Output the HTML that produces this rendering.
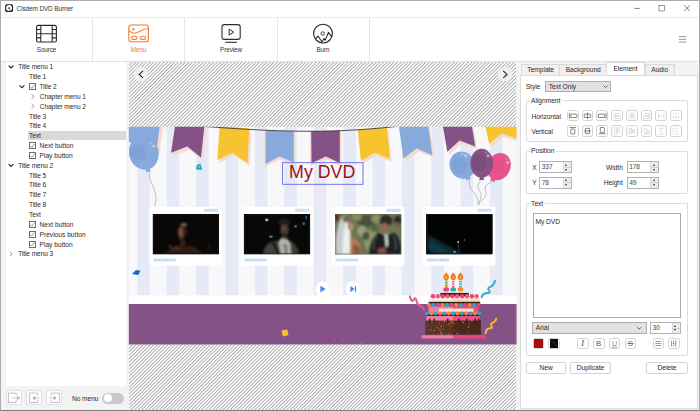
<!DOCTYPE html>
<html><head><meta charset="utf-8"><title>Cisdem DVD Burner</title>
<style>
*{box-sizing:border-box;margin:0;padding:0}
html,body{width:700px;height:411px;overflow:hidden;background:#f3f3f3}
body{font-family:"Liberation Sans",sans-serif;font-size:7px;color:#2a2a2a;position:relative}
.a{position:absolute}
.t{position:absolute;white-space:nowrap;line-height:10px;height:10px;font-size:6.6px;letter-spacing:-0.09px}
.r{font-size:6.7px;letter-spacing:-0.06px}
#win{left:0;top:0;width:700px;height:411px;border:1px solid #ababab;border-bottom:1.5px solid #7e7e7e;background:#f3f3f3}
#titlebar{left:1px;top:1px;width:698px;height:16px;background:#fff}
#toolbar{left:1px;top:17px;width:698px;height:44.5px;background:#fff;border-top:1px solid #ebebeb;border-bottom:1px solid #e2e2e2}
.vsep{position:absolute;top:18px;width:1px;height:43px;background:#e6e6e6}
#tree{left:5.5px;top:61.5px;width:120px;height:324.5px;background:#fff}
#hatch{left:128.7px;top:61.5px;width:387.8px;height:348px;background:#e9e9e9;background-image:repeating-linear-gradient(135deg,#a4a4a4 0,#fafafa 0.8px,#fafafa 1.7px,#a4a4a4 2.5px)}
#sel{left:27.5px;top:130.8px;width:98px;height:9.6px;background:#d9d9d9}
.cb{position:absolute;width:7.2px;height:7.2px;border:0.65px solid #6e6e6e;background:#fff}
.tbl{position:absolute;top:44.5px;width:60px;text-align:center;font-size:6.4px;line-height:10px;color:#333;letter-spacing:-0.13px}
#rp{left:519.5px;top:74.5px;width:178.5px;height:334.5px;background:#fff;border:1px solid #dcdcdc}
.tab{position:absolute;top:63.7px;height:11.3px;background:#f0f0f0;border:1px solid #d9d9d9;border-bottom:none;text-align:center;font-size:6.7px;line-height:10px;letter-spacing:-0.06px}
.tab.on{top:61.8px;height:13.7px;background:#fff;line-height:11.5px}
.grp{position:absolute;border:1px solid #dcdcdc;border-radius:1px}
.gl{position:absolute;background:#fff;padding:0 1.5px;white-space:nowrap;line-height:9px;height:9px;font-size:6.7px;letter-spacing:-0.06px}
.ab{position:absolute;width:11.8px;height:11.4px;border:1px solid #d2d2d2;border-radius:2.5px;background:#fff}
.spin{position:absolute;height:12px;border:1px solid #b2b2b2;background:#fff;font-size:6.6px;line-height:10px;padding-left:1.6px;letter-spacing:-0.1px;color:#444}
.spin i{position:absolute;right:0;top:0;width:8px;height:10px;background:#ececec;border-left:1px solid #d6d6d6}
.spin i:before{content:"";position:absolute;left:1.6px;top:1.5px;border:1.9px solid transparent;border-top:none;border-bottom:2px solid #2c2c2c}
.spin i:after{content:"";position:absolute;left:1.6px;bottom:1.5px;border:1.9px solid transparent;border-bottom:none;border-top:2px solid #2c2c2c}
.spin i b{position:absolute;left:0;top:4.6px;width:7px;height:0.8px;background:#d0d0d0}
.combo{position:absolute;height:11.4px;border:1px solid #adadad;background:#e2e2e2;font-size:6.7px;line-height:9.4px;padding-left:2.5px;letter-spacing:-0.06px}
.btn{position:absolute;height:11.8px;border:1px solid #d4d4d4;border-radius:2px;background:#fff;text-align:center;font-size:6.7px;line-height:9.8px;letter-spacing:-0.06px}
.sb{position:absolute;width:11.8px;height:11.8px;border:1px solid #d2d2d2;border-radius:2.5px;background:#fff}
.lb{position:absolute;width:16.3px;height:15px;border:1px solid #dedede;border-radius:2.5px;background:#fff}
svg{position:absolute;overflow:visible}
</style></head><body>
<div id="win" class="a"></div><div id="titlebar" class="a"></div><div id="toolbar" class="a"></div>
<div class="vsep" style="left:92px"></div><div class="vsep" style="left:184.3px"></div><div class="vsep" style="left:277px"></div><div class="vsep" style="left:369.3px"></div>
<svg style="left:5px;top:3.9px" width="8.2" height="8.2" viewBox="0 0 9 9"><rect x="0.2" y="0.2" width="8.6" height="8.6" rx="1.8" fill="#1d1a19"/><circle cx="4.5" cy="4.5" r="3.3" fill="#fff"/><circle cx="4.5" cy="4.5" r="1" fill="#1d1a19"/><path d="M4.7 4.6 L6.6 7.6 L4.9 8.2 Z" fill="#e4561f"/></svg>
<div class="t" style="left:16.6px;top:3.6px;color:#333;font-size:6.5px;letter-spacing:-0.15px">Cisdem DVD Burner</div>
<svg style="left:630px;top:2px" width="66" height="14" viewBox="630 2 66 14" fill="none" stroke="#555" stroke-width="0.7"><path d="M634.2 8.4H640"/><rect x="659" y="5.4" width="5.6" height="5.5" stroke-width="0.600"/><path d="M684.1 5.3l5.8 5.7M689.9 5.3l-5.8 5.7"/></svg>
<svg style="left:678px;top:35px" width="10" height="9" viewBox="678 35 10 9" stroke="#8a8a8a" stroke-width="0.9"><path d="M679 36.6h7.2M679 39.3h7.2M679 42h7.2"/></svg>
<svg style="left:35px;top:24px" width="24" height="20" viewBox="35 24 24 20" fill="none" stroke="#2c2c2c" stroke-width="1.1"><rect x="36.6" y="25.4" width="19.8" height="16.6" rx="1.6"/><path d="M40.8 25.4v16.6M52.2 25.4v16.6M40.8 33.7h11.4M36.6 29.5h4.2M36.6 33.7h4.2M36.6 37.9h4.2M52.2 29.5h4.2M52.2 33.7h4.2M52.2 37.9h4.2"/></svg>
<svg style="left:127px;top:23px" width="24" height="21" viewBox="127 23 24 21" fill="none" stroke="#f47b30" stroke-width="1.1"><rect x="128.8" y="25" width="19.6" height="16.8" rx="2.6"/><path d="M129 30.4c2.200 2.400 5 3.600 8.200 2.200s6-4.400 11.200-3.700"/><circle cx="133.4" cy="29.3" r="0.9" fill="#f47b30" stroke-width="0.6"/><rect x="131.6" y="36.3" width="5.4" height="3.1" rx="1.5"/><rect x="140.2" y="36.3" width="5.4" height="3.1" rx="1.5"/></svg>
<svg style="left:220px;top:23px" width="24" height="21" viewBox="220 23 24 21" fill="none" stroke="#2c2c2c" stroke-width="1.1"><rect x="222" y="24.6" width="18.2" height="14.8" rx="2.2"/><path d="M225.4 42.3h11.6"/><path d="M229.2 29.2v5.8l4.6-2.9z" stroke-width="1" stroke-linejoin="round"/></svg>
<svg style="left:312px;top:23px" width="24" height="22" viewBox="312 23 24 22" fill="none" stroke="#222" stroke-width="1.1"><circle cx="323" cy="33.6" r="9.400"/><circle cx="322.700" cy="33.500" r="1.700" stroke-width="0.900"/><path d="M315.300 39l2.900-2.800 3.800 5.800 2-3.400 1.200 1.600 3.200-7.800 3.500 4.700" stroke-linejoin="round" stroke-width="1.050"/></svg>
<div class="tbl" style="left:16.5px;color:#333">Source</div><div class="tbl" style="left:108.6px;color:#f47b30">Menu</div><div class="tbl" style="left:201px;color:#333">Preview</div><div class="tbl" style="left:293px;color:#333">Burn</div>
<div id="tree" class="a"></div><div id="sel" class="a"></div>
<div class="t" style="left:18.2px;top:62px">Title menu 1</div><div class="t" style="left:29px;top:72px">Title 1</div><div class="cb" style="left:28.8px;top:82.99px"></div><div class="t" style="left:39.5px;top:82px">Title 2</div><div class="t" style="left:39.8px;top:92px">Chapter menu 1</div><div class="t" style="left:39.8px;top:102px">Chapter menu 2</div><div class="t" style="left:29px;top:112px">Title 3</div><div class="t" style="left:29px;top:121px">Title 4</div><div class="t" style="left:29px;top:131px">Text</div><div class="cb" style="left:28.8px;top:142.06px"></div><div class="t" style="left:39.5px;top:141px;letter-spacing:0.02px">Next button</div><div class="cb" style="left:28.8px;top:151.91px"></div><div class="t" style="left:39.5px;top:151px;letter-spacing:0.02px">Play button</div><div class="t" style="left:18.2px;top:161px">Title menu 2</div><div class="t" style="left:29px;top:171px">Title 5</div><div class="t" style="left:29px;top:180px">Title 6</div><div class="t" style="left:29px;top:190px">Title 7</div><div class="t" style="left:29px;top:200px">Title 8</div><div class="t" style="left:29px;top:210px">Text</div><div class="cb" style="left:28.8px;top:220.82px"></div><div class="t" style="left:39.5px;top:220px;letter-spacing:0.02px">Next button</div><div class="cb" style="left:28.8px;top:230.67px"></div><div class="t" style="left:39.5px;top:230px;letter-spacing:0.02px">Previous button</div><div class="cb" style="left:28.8px;top:240.51px"></div><div class="t" style="left:39.5px;top:240px;letter-spacing:0.02px">Play button</div><div class="t" style="left:18.2px;top:249px">Title menu 3</div>
<svg style="left:0;top:0" width="130" height="411" viewBox="0 0 130 411" fill="none" stroke="#2a2a2a"><path d="M8.60 65.60l2.4 2.4 2.4-2.4" stroke-width="1.1" stroke="#222"/><path d="M30.30 86.69l1.5 1.7 2.9-3.6" stroke-width="0.6" stroke="#555"/><path d="M19.60 85.29l2.4 2.4 2.4-2.4" stroke-width="1.1" stroke="#222"/><path d="M31.70 94.14l2.3 2.3-2.3 2.3" stroke-width="0.7" stroke="#666"/><path d="M31.70 103.98l2.3 2.3-2.3 2.3" stroke-width="0.7" stroke="#666"/><path d="M30.30 145.76l1.5 1.7 2.9-3.6" stroke-width="0.6" stroke="#555"/><path d="M30.30 155.60l1.5 1.7 2.9-3.6" stroke-width="0.6" stroke="#555"/><path d="M8.60 164.05l2.4 2.4 2.4-2.4" stroke-width="1.1" stroke="#222"/><path d="M30.30 224.52l1.5 1.7 2.9-3.6" stroke-width="0.6" stroke="#555"/><path d="M30.30 234.37l1.5 1.7 2.9-3.6" stroke-width="0.6" stroke="#555"/><path d="M30.30 244.21l1.5 1.7 2.9-3.6" stroke-width="0.6" stroke="#555"/><path d="M9.90 251.66l2.3 2.3-2.3 2.3" stroke-width="0.7" stroke="#666"/></svg>
<div class="lb" style="left:5.6px;top:390.4px"></div><div class="lb" style="left:26px;top:390.4px"></div><div class="lb" style="left:46.2px;top:390.4px"></div><svg style="left:0;top:388px" width="70" height="20" viewBox="0 388 70 20" fill="none" stroke="#b0b0b0" stroke-width="0.8"><path d="M16.200 395.600v-2.500h-7.800v9.400h7.800v-2.500"/><path d="M12.400 398h5.400"/><path d="M17.400 396.400l2.200 1.600-2.200 1.600z" fill="#b0b0b0"/>
<path d="M37.700 395.600v-2.500h-8.300v9.400h8.300v-2.500"/><path d="M34.600 398h4.800"/><path d="M35 396.400l-2.200 1.600 2.200 1.600z" fill="#b0b0b0"/>
<path d="M51.200 395.600v-2.500h8.200v9.400h-8.200v-2.500"/><path d="M49.200 398h5"/><path d="M54 396.400l2.200 1.600-2.200 1.600z" fill="#b0b0b0"/></svg>
<div class="t" style="left:71.9px;top:393.7px;font-size:6.7px">No menu</div>
<div class="a" style="left:102.1px;top:392.7px;width:22px;height:11.2px;border-radius:5.6px;background:#c9c9c9"></div><div class="a" style="left:103.6px;top:394.2px;width:8.2px;height:8.2px;border-radius:50%;background:#fff"></div>
<div id="hatch" class="a"></div>
<svg style="left:128px;top:126px" width="390" height="220" viewBox="128 126 390 220"><defs><filter id="b1" x="-20%" y="-20%" width="140%" height="140%"><feGaussianBlur stdDeviation="1.2"/></filter><filter id="b2" x="-20%" y="-20%" width="140%" height="140%"><feGaussianBlur stdDeviation="2.2"/></filter><filter id="b9" x="-20%" y="-20%" width="140%" height="140%"><feGaussianBlur stdDeviation="0.9"/></filter><filter id="b0" x="-20%" y="-20%" width="140%" height="140%"><feGaussianBlur stdDeviation="0.6"/></filter><clipPath id="c0"><rect x="152.8" y="214" width="66.2" height="40.3"/></clipPath><clipPath id="c1"><rect x="243.9" y="214" width="66.2" height="40.3"/></clipPath><clipPath id="c2"><rect x="335.0" y="214" width="66.2" height="40.3"/></clipPath><clipPath id="c3"><rect x="426.1" y="214" width="66.2" height="40.3"/></clipPath><clipPath id="ic"><rect x="128.8" y="126.7" width="387.7" height="217.8"/></clipPath></defs><g clip-path="url(#ic)"><rect x="128.8" y="126.7" width="400" height="230" fill="#f8f8fb"/><rect x="137.3" y="126.7" width="12.6" height="168.7" fill="#e5eaf6"/><rect x="166.7" y="126.7" width="12.6" height="168.7" fill="#e5eaf6"/><rect x="196.1" y="126.7" width="12.6" height="168.7" fill="#e5eaf6"/><rect x="225.5" y="126.7" width="12.6" height="168.7" fill="#e5eaf6"/><rect x="254.9" y="126.7" width="12.6" height="168.7" fill="#e5eaf6"/><rect x="284.3" y="126.7" width="12.6" height="168.7" fill="#e5eaf6"/><rect x="313.7" y="126.7" width="12.6" height="168.7" fill="#e5eaf6"/><rect x="343.1" y="126.7" width="12.6" height="168.7" fill="#e5eaf6"/><rect x="372.5" y="126.7" width="12.6" height="168.7" fill="#e5eaf6"/><rect x="401.9" y="126.7" width="12.6" height="168.7" fill="#e5eaf6"/><rect x="431.3" y="126.7" width="12.6" height="168.7" fill="#e5eaf6"/><rect x="460.7" y="126.7" width="12.6" height="168.7" fill="#e5eaf6"/><rect x="490.1" y="126.7" width="12.6" height="168.7" fill="#e5eaf6"/><rect x="128" y="295.4" width="390" height="8.6" fill="#fff"/><rect x="128" y="304" width="390" height="41" fill="#845286"/><rect x="515.4" y="304" width="1.2" height="41" fill="#9a6b9b"/><polygon points="131.0,123.5 163.7,123.5 159.4,153.5 146.0,153.5 131.0,144.5" fill="#f3dccf"/><polygon points="128.0,120.0 160.7,120.0 156.4,150.0 143.0,150.0 128.0,141.0" fill="#87a9dc"/><polygon points="178.2,123.2 207.0,125.2 203.2,160.6 189.5,149.8 173.2,155.9" fill="#f3dccf"/><polygon points="176.0,120.0 204.8,122.0 201.0,157.4 187.3,146.6 171.0,152.7" fill="#845286"/><polygon points="221.6,129.0 251.2,131.6 249.6,165.9 234.7,155.7 219.4,162.9" fill="#f3dccf"/><polygon points="219.6,126.0 249.2,128.6 247.6,162.9 232.7,152.7 217.4,159.9" fill="#f7c32e"/><polygon points="264.2,131 295.800,131.400 295.800,166 279.600,159.600 264.200,167.400" fill="#f3dccf"/><polygon points="265.6,130.6 293.8,131.2 293.8,162.5 279.5,156.4 265.6,164.0" fill="#f3dccf"/><polygon points="265.6,130.6 293.8,131.2 293.8,162.5 279.5,156.4 265.6,164.0" fill="#87a9dc"/><polygon points="309.800,131.400 341.600,131 341.600,166.200 326,159.600 310,166.600" fill="#f3dccf"/><polygon points="311.2,131.2 339.8,130.8 339.8,162.9 325.9,156.4 311.5,163.3" fill="#f3dccf"/><polygon points="311.2,131.2 339.8,130.8 339.8,162.9 325.9,156.4 311.5,163.3" fill="#845286"/><polygon points="359.6,132.8 388.6,130.8 391.7,162.0 376.4,155.9 362.7,164.1" fill="#f3dccf"/><polygon points="357.8,129.6 386.8,127.6 389.9,158.8 374.6,152.7 360.9,160.9" fill="#f7c32e"/><polygon points="400.0,123.0 429.4,123.0 434.4,158.2 418.7,151.6 405.4,161.4" fill="#f3dccf"/><polygon points="398.0,120.0 427.4,120.0 432.4,155.2 416.7,148.6 403.4,158.4" fill="#87a9dc"/><polygon points="443.8,123.0 472.9,123.0 477.3,149.6 461.6,143.4 449.3,154.7" fill="#f3dccf"/><polygon points="441.8,120.0 470.9,120.0 475.3,146.6 459.6,140.4 447.3,151.7" fill="#845286"/><polygon points="486.0,123.4 522.0,123.4 522.0,142.9 503.5,136.7 491.2,147.5" fill="#f3dccf"/><polygon points="484.0,120.0 520.0,120.0 520.0,139.5 501.5,133.3 489.2,144.1" fill="#f7c32e"/><path d="M203 126.3C240 129.2 270 130.8 300 131.2S360 130.4 397 126.4" fill="none" stroke="#3e3a3a" stroke-width="0.9"/><g transform="rotate(-14 143.800 152.600)"><path d="M142.200 169l-1 3.400h5.200l-1-3.400z" fill="#87a9dc"/><ellipse cx="143.800" cy="152.600" rx="14.800" ry="17.300" fill="#87a9dc"/></g><circle cx="137.800" cy="152.600" r="8" fill="#7fa2d6"/><circle cx="153.600" cy="146.200" r="1.700" fill="#b3cbed"/><circle cx="150.600" cy="142.800" r="1" fill="#b3cbed"/><path d="M149.800 172.600c-1.500 8 4.500 14 5.800 22s-2 10 0 12" fill="none" stroke="#9a9a9a" stroke-width="0.600"/><path d="M469.700 180.500c-0.600 3 -0.400 5 0.600 7.500 1.500 3.400 4.600 4.600 6.200 8.400 1.200 3 1.400 5.600 1.700 8.600M481 179.500c-1.800 2.600-3.200 4.600-3.100 7.200 0.200 3 2.800 4.800 3.200 7.800 0.400 3.600-2 6.600-2.700 10.500M491 182.500c-3.400 1.200-5.400 2.800-5.800 5.200-0.400 2.400 1.200 4.200 0.900 6.800-0.400 3-3.400 4.800-5.400 6.800-1.200 1.200-2 2.400-2.500 3.700" fill="none" stroke="#9a9a9a" stroke-width="0.600"/><g transform="rotate(24 498.8 166.6)"><path d="M497.2 180.0l-1 2.600h5.200l-1-2.600z" fill="#e8558b"/><ellipse cx="498.8" cy="166.6" rx="11.6" ry="14" fill="#e8558b"/><ellipse cx="496.3" cy="166.1" rx="7.2" ry="8.7" fill="#e45087"/><circle cx="505.2" cy="159.3" r="1.500" fill="#fff" fill-opacity="0.450"/><circle cx="503.0" cy="156.1" r="0.800" fill="#fff" fill-opacity="0.450"/></g><g transform="rotate(-24 462.3 165.2)"><path d="M460.7 178.6l-1 2.600h5.200l-1-2.600z" fill="#87a9dc"/><ellipse cx="462.3" cy="165.2" rx="12.6" ry="14" fill="#87a9dc"/><ellipse cx="459.8" cy="164.7" rx="7.8" ry="8.7" fill="#80a3d7"/><circle cx="469.2" cy="157.9" r="1.500" fill="#fff" fill-opacity="0.450"/><circle cx="466.8" cy="154.7" r="0.800" fill="#fff" fill-opacity="0.450"/></g><g transform="rotate(0 481.7 163.3)"><path d="M480.1 177.3l-1 2.600h5.200l-1-2.600z" fill="#845286"/><ellipse cx="481.7" cy="163.3" rx="11.4" ry="14.6" fill="#845286"/><ellipse cx="479.2" cy="162.8" rx="7.1" ry="9.1" fill="#7d4c7f"/><circle cx="488.0" cy="155.7" r="1.500" fill="#fff" fill-opacity="0.450"/><circle cx="485.8" cy="152.4" r="0.800" fill="#fff" fill-opacity="0.450"/></g><polygon points="196.600,165.200 200.400,163.400 202.400,169.600 196.200,169.800" fill="#1fb0b0"/><rect x="198.300" y="166" width="2" height="2" fill="#5fd0d0"/><polygon points="136,270.100 140.600,270.800 138.200,275.100 132,274" fill="#0f6cbf"/><polygon points="281.600,330.600 287.200,329.600 288.600,335 282.800,336.600" fill="#f7c32e"/><circle cx="334.600" cy="339" r="1" fill="#e8457f"/><circle cx="343" cy="339.800" r="0.900" fill="#e8457f"/><polygon points="360.500,344.500 362,342.300 363.600,344.500" fill="#1fb0b0"/><rect x="149.5" y="206.900" width="72.600" height="58.600" fill="#fff"/><ellipse cx="205.7" cy="210.300" rx="1.350" ry="1.150" fill="none" stroke="#7fb6ec" stroke-width="0.550"/><ellipse cx="208.5" cy="210.300" rx="1.350" ry="1.150" fill="none" stroke="#7fb6ec" stroke-width="0.550"/><ellipse cx="211.3" cy="210.300" rx="1.350" ry="1.150" fill="none" stroke="#7fb6ec" stroke-width="0.550"/><ellipse cx="214.1" cy="210.300" rx="1.350" ry="1.150" fill="none" stroke="#7fb6ec" stroke-width="0.550"/><ellipse cx="216.9" cy="210.300" rx="1.350" ry="1.150" fill="none" stroke="#7fb6ec" stroke-width="0.550"/><ellipse cx="155.1" cy="260" rx="1.350" ry="1.150" fill="none" stroke="#7fb6ec" stroke-width="0.550"/><ellipse cx="157.8" cy="260" rx="1.350" ry="1.150" fill="none" stroke="#7fb6ec" stroke-width="0.550"/><ellipse cx="160.6" cy="260" rx="1.350" ry="1.150" fill="none" stroke="#7fb6ec" stroke-width="0.550"/><ellipse cx="163.3" cy="260" rx="1.350" ry="1.150" fill="none" stroke="#7fb6ec" stroke-width="0.550"/><ellipse cx="166.1" cy="260" rx="1.350" ry="1.150" fill="none" stroke="#7fb6ec" stroke-width="0.550"/><ellipse cx="168.8" cy="260" rx="1.350" ry="1.150" fill="none" stroke="#7fb6ec" stroke-width="0.550"/><ellipse cx="171.6" cy="260" rx="1.350" ry="1.150" fill="none" stroke="#7fb6ec" stroke-width="0.550"/><ellipse cx="174.3" cy="260" rx="1.350" ry="1.150" fill="none" stroke="#7fb6ec" stroke-width="0.550"/><rect x="152.8" y="214" width="66.200" height="40.300" fill="#030303"/><rect x="240.6" y="206.900" width="72.600" height="58.600" fill="#fff"/><ellipse cx="296.8" cy="210.300" rx="1.350" ry="1.150" fill="none" stroke="#7fb6ec" stroke-width="0.550"/><ellipse cx="299.6" cy="210.300" rx="1.350" ry="1.150" fill="none" stroke="#7fb6ec" stroke-width="0.550"/><ellipse cx="302.4" cy="210.300" rx="1.350" ry="1.150" fill="none" stroke="#7fb6ec" stroke-width="0.550"/><ellipse cx="305.2" cy="210.300" rx="1.350" ry="1.150" fill="none" stroke="#7fb6ec" stroke-width="0.550"/><ellipse cx="308.0" cy="210.300" rx="1.350" ry="1.150" fill="none" stroke="#7fb6ec" stroke-width="0.550"/><ellipse cx="246.2" cy="260" rx="1.350" ry="1.150" fill="none" stroke="#7fb6ec" stroke-width="0.550"/><ellipse cx="248.9" cy="260" rx="1.350" ry="1.150" fill="none" stroke="#7fb6ec" stroke-width="0.550"/><ellipse cx="251.7" cy="260" rx="1.350" ry="1.150" fill="none" stroke="#7fb6ec" stroke-width="0.550"/><ellipse cx="254.4" cy="260" rx="1.350" ry="1.150" fill="none" stroke="#7fb6ec" stroke-width="0.550"/><ellipse cx="257.2" cy="260" rx="1.350" ry="1.150" fill="none" stroke="#7fb6ec" stroke-width="0.550"/><ellipse cx="259.9" cy="260" rx="1.350" ry="1.150" fill="none" stroke="#7fb6ec" stroke-width="0.550"/><ellipse cx="262.7" cy="260" rx="1.350" ry="1.150" fill="none" stroke="#7fb6ec" stroke-width="0.550"/><ellipse cx="265.4" cy="260" rx="1.350" ry="1.150" fill="none" stroke="#7fb6ec" stroke-width="0.550"/><rect x="243.9" y="214" width="66.200" height="40.300" fill="#030303"/><rect x="331.7" y="206.900" width="72.600" height="58.600" fill="#fff"/><ellipse cx="387.9" cy="210.300" rx="1.350" ry="1.150" fill="none" stroke="#7fb6ec" stroke-width="0.550"/><ellipse cx="390.7" cy="210.300" rx="1.350" ry="1.150" fill="none" stroke="#7fb6ec" stroke-width="0.550"/><ellipse cx="393.5" cy="210.300" rx="1.350" ry="1.150" fill="none" stroke="#7fb6ec" stroke-width="0.550"/><ellipse cx="396.3" cy="210.300" rx="1.350" ry="1.150" fill="none" stroke="#7fb6ec" stroke-width="0.550"/><ellipse cx="399.1" cy="210.300" rx="1.350" ry="1.150" fill="none" stroke="#7fb6ec" stroke-width="0.550"/><ellipse cx="337.3" cy="260" rx="1.350" ry="1.150" fill="none" stroke="#7fb6ec" stroke-width="0.550"/><ellipse cx="340.1" cy="260" rx="1.350" ry="1.150" fill="none" stroke="#7fb6ec" stroke-width="0.550"/><ellipse cx="342.8" cy="260" rx="1.350" ry="1.150" fill="none" stroke="#7fb6ec" stroke-width="0.550"/><ellipse cx="345.6" cy="260" rx="1.350" ry="1.150" fill="none" stroke="#7fb6ec" stroke-width="0.550"/><ellipse cx="348.3" cy="260" rx="1.350" ry="1.150" fill="none" stroke="#7fb6ec" stroke-width="0.550"/><ellipse cx="351.1" cy="260" rx="1.350" ry="1.150" fill="none" stroke="#7fb6ec" stroke-width="0.550"/><ellipse cx="353.8" cy="260" rx="1.350" ry="1.150" fill="none" stroke="#7fb6ec" stroke-width="0.550"/><ellipse cx="356.6" cy="260" rx="1.350" ry="1.150" fill="none" stroke="#7fb6ec" stroke-width="0.550"/><rect x="335.0" y="214" width="66.200" height="40.300" fill="#030303"/><rect x="422.8" y="206.900" width="72.600" height="58.600" fill="#fff"/><ellipse cx="479.0" cy="210.300" rx="1.350" ry="1.150" fill="none" stroke="#7fb6ec" stroke-width="0.550"/><ellipse cx="481.8" cy="210.300" rx="1.350" ry="1.150" fill="none" stroke="#7fb6ec" stroke-width="0.550"/><ellipse cx="484.6" cy="210.300" rx="1.350" ry="1.150" fill="none" stroke="#7fb6ec" stroke-width="0.550"/><ellipse cx="487.4" cy="210.300" rx="1.350" ry="1.150" fill="none" stroke="#7fb6ec" stroke-width="0.550"/><ellipse cx="490.2" cy="210.300" rx="1.350" ry="1.150" fill="none" stroke="#7fb6ec" stroke-width="0.550"/><ellipse cx="428.4" cy="260" rx="1.350" ry="1.150" fill="none" stroke="#7fb6ec" stroke-width="0.550"/><ellipse cx="431.1" cy="260" rx="1.350" ry="1.150" fill="none" stroke="#7fb6ec" stroke-width="0.550"/><ellipse cx="433.9" cy="260" rx="1.350" ry="1.150" fill="none" stroke="#7fb6ec" stroke-width="0.550"/><ellipse cx="436.6" cy="260" rx="1.350" ry="1.150" fill="none" stroke="#7fb6ec" stroke-width="0.550"/><ellipse cx="439.4" cy="260" rx="1.350" ry="1.150" fill="none" stroke="#7fb6ec" stroke-width="0.550"/><ellipse cx="442.1" cy="260" rx="1.350" ry="1.150" fill="none" stroke="#7fb6ec" stroke-width="0.550"/><ellipse cx="444.9" cy="260" rx="1.350" ry="1.150" fill="none" stroke="#7fb6ec" stroke-width="0.550"/><ellipse cx="447.6" cy="260" rx="1.350" ry="1.150" fill="none" stroke="#7fb6ec" stroke-width="0.550"/><rect x="426.1" y="214" width="66.200" height="40.300" fill="#030303"/><g clip-path="url(#c0)"><rect x="153.60000000000002" y="214.800" width="64.600" height="38.700" fill="#0a0806"/><g filter="url(#b9)"><ellipse cx="182.400" cy="232" rx="4.400" ry="6.600" fill="#3a2519"/><ellipse cx="180.800" cy="232.400" rx="2.600" ry="5.200" fill="#7a4e38"/><ellipse cx="184.600" cy="232.800" rx="1.800" ry="4.600" fill="#2a1a12"/><ellipse cx="183.800" cy="224.600" rx="3.400" ry="1.600" fill="#6e675c"/><ellipse cx="181.500" cy="238.500" rx="2" ry="1.600" fill="#4a2c1e"/><path d="M166 253.500c3-5 8-7.500 13-8l4 1.500 5-1.500c6 0.500 11 3 14 8z" fill="#2e1c13"/><ellipse cx="176.500" cy="248.500" rx="5" ry="2" fill="#4a2c1e"/><rect x="180.500" y="240" width="4.600" height="6" fill="#3a2418"/><rect x="169.500" y="245.600" width="1.600" height="1.800" fill="#7a6a58"/><rect x="208.600" y="245.400" width="1" height="3.400" fill="#4a4a4a"/></g></g><rect x="153.8" y="215" width="64.200" height="38.300" fill="none" stroke="#2e2c24" stroke-width="0.350"/><g clip-path="url(#c1)"><rect x="244.70000000000002" y="214.800" width="64.600" height="38.700" fill="#070807"/><g filter="url(#b9)"><ellipse cx="284.200" cy="222.600" rx="6" ry="4.600" fill="#221a15"/><ellipse cx="284.600" cy="230.200" rx="4.200" ry="6" fill="#4e382b"/><ellipse cx="283.200" cy="228" rx="2" ry="2.600" fill="#6a4c3a"/><ellipse cx="284.600" cy="235.400" rx="3" ry="2.200" fill="#2e211a"/><path d="M263 254c1-8 6-12 12-13.500l5 2.500 3 11z" fill="#41423d"/><path d="M278.500 241l3-3 6 1 3.500 5 0.500 10h-11z" fill="#b5b4ad"/><path d="M290 241c5 2 8 6 9 13h-8z" fill="#3a3c36"/><path d="M273 240l8 14h-3l-7-12z" fill="#101010"/><path d="M283 244l2 10h3l-1-10z" fill="#7c7c76"/></g><g filter="url(#b0)"><ellipse cx="266.800" cy="219.900" rx="1.700" ry="1.300" fill="#b5b19a"/><ellipse cx="271" cy="236.600" rx="2" ry="1.100" fill="#77796c"/><circle cx="295.600" cy="226.200" r="1.200" fill="#a85e44"/><circle cx="303.600" cy="223.600" r="1.600" fill="#1d6466"/><rect x="305.400" y="216" width="1.400" height="3.400" fill="#1f7a7c"/></g></g><rect x="244.9" y="215" width="64.200" height="38.300" fill="none" stroke="#34382f" stroke-width="0.350"/><g clip-path="url(#c2)"><rect x="335" y="214" width="66.200" height="40.300" fill="#6c7652"/><g filter="url(#b9)"><ellipse cx="366" cy="221" rx="9" ry="6" fill="#46523a"/><ellipse cx="371" cy="241" rx="7" ry="11" fill="#8d9470"/><ellipse cx="362" cy="231" rx="4.500" ry="5.500" fill="#9aa07c"/><ellipse cx="376" cy="219" rx="5" ry="4" fill="#8a9068"/><ellipse cx="357" cy="217.500" rx="5" ry="3.500" fill="#858c64"/><ellipse cx="366" cy="236" rx="3.500" ry="4" fill="#4a553a"/><ellipse cx="374" cy="228" rx="3" ry="4" fill="#56603f"/><rect x="335" y="214" width="4" height="7" fill="#5e261c"/><path d="M336 254c-1-16 1-30 6-37 3-3 6-2 7 2 2 9 2 24 1 35z" fill="#c9cdd2"/><path d="M342.500 254c0-14 1-26 4-33l3 4c1 9 1 19 0 29z" fill="#eeeeec"/><ellipse cx="346.500" cy="219" rx="4" ry="3.400" fill="#77694c"/><ellipse cx="350.200" cy="225.500" rx="2.400" ry="4.400" fill="#9a7258"/><ellipse cx="351.600" cy="226.500" rx="1.500" ry="3.400" fill="#c09478"/><path d="M350 237c4 0 8 3 10 8l1 10h-11z" fill="#b07a5a"/><path d="M353 245c3-1 6 1 7 5v5h-7z" fill="#8a5a44"/><ellipse cx="386" cy="220.500" rx="6.600" ry="5.400" fill="#2e2c2a"/><ellipse cx="384.500" cy="227.800" rx="4.200" ry="4.800" fill="#96684e"/><ellipse cx="397.800" cy="220.500" rx="3.600" ry="4.600" fill="#2a2422"/><ellipse cx="397.400" cy="224.500" rx="2.400" ry="2.800" fill="#7a5642"/><path d="M369 254c0-9 3-17 9-21l8 3 8-3c5 3 7 9 7 21z" fill="#1c1d20"/><path d="M384.600 234l2.800 0 1 11-2.600 3z" fill="#cfd0d2"/><path d="M377 236c-3 3-4 9-3 14M393.500 236c2 4 3 9 2 14" stroke="#4c5054" stroke-width="1.500" fill="none"/><ellipse cx="382" cy="250.500" rx="4.500" ry="2.800" fill="#8a4e3c"/></g></g><g clip-path="url(#c3)"><rect x="426.9" y="214" width="66.200" height="40.300" fill="#020303"/><g filter="url(#b1)"><path d="M428 235l36 19h-36z" fill="#0a2a32"/><path d="M428 240l22 12h-22z" fill="#0e3a44"/><path d="M428 249l8 5h-8z" fill="#06181c"/></g><g filter="url(#b0)"><rect x="457.400" y="241" width="1.600" height="2" fill="#9aa"/><rect x="453.600" y="251" width="2" height="1.600" fill="#9aa"/><rect x="464" y="239" width="0.800" height="2" fill="#567"/><path d="M458 243l1 10" stroke="#1a2a30" stroke-width="1.600"/></g></g><rect x="427.7" y="214.800" width="64.600" height="38.700" fill="none" stroke="#262a2a" stroke-width="0.400"/><circle cx="322.800" cy="289.100" r="7.600" fill="#fff"/><circle cx="352.900" cy="289.100" r="7.600" fill="#fff"/><path d="M320.400 285.800v6.600l5.400-3.300z" fill="#4a90e2"/><path d="M350.300 286v6.200l4.400-3.100z" fill="#4a90e2"/><rect x="354.900" y="286" width="1.200" height="6.200" fill="#4a90e2"/><path d="M409.800 296.400c0.800 2.500 1.800 5 3 4.500s1-3 2.400-2.600 1.200 4 2.400 5.600 3.200 2 4.400 3 1.600 1.800 2 2.800" fill="none" stroke="#ea5a8e" stroke-width="2" stroke-linecap="round" stroke-linejoin="round"/><path d="M481.600 297.300c0.800-2.600 2.600-4 4.400-4.200s3.200 0.600 3.600-0.800-1.600-2.400-1.200-4 2.600-1.400 4-2.600 2-3 2.600-4.800" fill="none" stroke="#41b4c8" stroke-width="2.200" stroke-linecap="round" stroke-linejoin="round"/><path d="M485.600 333.200c0.200-2.600 1.600-4.200 3.200-4.800s3 0.200 3.200-1-1.400-1.800-1-3.200 2.200-1.400 3.400-2.400 1.600-1.800 1.800-3" fill="none" stroke="#f7b52e" stroke-width="2" stroke-linecap="round" stroke-linejoin="round"/><rect x="421.500" y="335.200" width="32" height="3.300" rx="1.200" fill="#f47aa8"/><rect x="453" y="335.200" width="32.700" height="3.300" rx="1.200" fill="#e8457f"/><rect x="425.400" y="320" width="28" height="14.600" fill="#5b3323"/><rect x="453" y="320" width="27.900" height="14.600" fill="#4a291b"/><rect x="426.400" y="315" width="27" height="5.600" fill="#f47aa8"/><rect x="453" y="315" width="27" height="5.600" fill="#ea4f88"/><rect x="429" y="318.600" width="1.600" height="4.5" rx="0.800" fill="#3a1f14"/><rect x="433.5" y="318.600" width="1.600" height="3.5" rx="0.800" fill="#3a1f14"/><rect x="447" y="318.600" width="1.600" height="4.0" rx="0.800" fill="#3a1f14"/><rect x="458" y="318.600" width="1.600" height="4.5" rx="0.800" fill="#3a1f14"/><rect x="466" y="318.600" width="1.600" height="4.1" rx="0.800" fill="#3a1f14"/><rect x="474.5" y="318.600" width="1.600" height="4.7" rx="0.800" fill="#3a1f14"/><rect x="478" y="318.600" width="1.600" height="3.5" rx="0.800" fill="#3a1f14"/><rect x="426" y="314.400" width="54.400" height="1.600" fill="#3a1f14"/><rect x="428.600" y="306.400" width="24.400" height="7" fill="#f47aa8"/><rect x="453" y="306.400" width="25.600" height="7" fill="#ea4f88"/><rect x="439" y="308.600" width="34.600" height="3.200" fill="#f5e6c8"/><rect x="429.300" y="298.600" width="50.600" height="3.600" rx="1" fill="#f7ecd2"/><rect x="453" y="298.600" width="26.900" height="3.600" rx="1" fill="#efdcb8"/><rect x="428.600" y="301.800" width="51.600" height="2" fill="#3a1f14"/><circle cx="427.0" cy="313.5" r="1.9" fill="#2ea8c0"/><circle cx="431.4" cy="313.5" r="1.9" fill="#f28a2e"/><circle cx="435.7" cy="313.5" r="1.9" fill="#2ea8c0"/><circle cx="440.1" cy="313.5" r="1.9" fill="#f28a2e"/><circle cx="444.5" cy="313.5" r="1.9" fill="#2ea8c0"/><circle cx="448.8" cy="313.5" r="1.9" fill="#f28a2e"/><circle cx="453.2" cy="313.5" r="1.9" fill="#2ea8c0"/><circle cx="457.6" cy="313.5" r="1.9" fill="#f28a2e"/><circle cx="461.9" cy="313.5" r="1.9" fill="#2ea8c0"/><circle cx="466.3" cy="313.5" r="1.9" fill="#f28a2e"/><circle cx="470.7" cy="313.5" r="1.9" fill="#2ea8c0"/><circle cx="475.0" cy="313.5" r="1.9" fill="#f28a2e"/><circle cx="479.4" cy="313.5" r="1.9" fill="#2ea8c0"/><circle cx="429.0" cy="304.9" r="1.9" fill="#f28a2e"/><circle cx="433.5" cy="304.9" r="1.9" fill="#2ea8c0"/><circle cx="438.1" cy="304.9" r="1.9" fill="#e8457f"/><circle cx="442.6" cy="304.9" r="1.9" fill="#f28a2e"/><circle cx="447.1" cy="304.9" r="1.9" fill="#2ea8c0"/><circle cx="451.6" cy="304.9" r="1.9" fill="#e8457f"/><circle cx="456.2" cy="304.9" r="1.9" fill="#f28a2e"/><circle cx="460.7" cy="304.9" r="1.9" fill="#2ea8c0"/><circle cx="465.2" cy="304.9" r="1.9" fill="#e8457f"/><circle cx="469.7" cy="304.9" r="1.9" fill="#f28a2e"/><circle cx="474.3" cy="304.9" r="1.9" fill="#2ea8c0"/><circle cx="478.8" cy="304.9" r="1.9" fill="#e8457f"/><rect x="440.400" y="292.600" width="28.400" height="3.600" fill="#3a1f14"/><rect x="439.800" y="290.900" width="29.600" height="1.800" rx="0.800" fill="#f7ecd2"/><circle cx="442" cy="296" r="1.100" fill="#3a1f14"/><circle cx="446.5" cy="296" r="1.100" fill="#3a1f14"/><circle cx="451" cy="296" r="1.100" fill="#3a1f14"/><circle cx="456" cy="296" r="1.100" fill="#3a1f14"/><circle cx="461" cy="296" r="1.100" fill="#3a1f14"/><circle cx="465.5" cy="296" r="1.100" fill="#3a1f14"/><circle cx="433.0" cy="296.3" r="2.3" fill="#e8457f"/><circle cx="437.8" cy="296.3" r="2.3" fill="#ec5a90"/><circle cx="442.7" cy="296.3" r="2.3" fill="#e8457f"/><circle cx="447.5" cy="296.3" r="2.3" fill="#ec5a90"/><circle cx="452.4" cy="296.3" r="2.3" fill="#e8457f"/><circle cx="457.2" cy="296.3" r="2.3" fill="#ec5a90"/><circle cx="462.1" cy="296.3" r="2.3" fill="#e8457f"/><circle cx="466.9" cy="296.3" r="2.3" fill="#ec5a90"/><circle cx="471.8" cy="296.3" r="2.3" fill="#e8457f"/><circle cx="476.6" cy="296.3" r="2.3" fill="#ec5a90"/><rect x="444.9" y="280.400" width="2.600" height="8" fill="#2ea8c0"/><path d="M444.9 281.4l2.600-1.200v1.500l-2.600 1.200z" fill="#f7c32e"/><path d="M444.9 284.0l2.600-1.200v1.500l-2.600 1.200z" fill="#f7c32e"/><path d="M444.9 286.6l2.600-1.200v1.500l-2.600 1.200z" fill="#f7c32e"/><ellipse cx="446.2" cy="289.400" rx="2.900" ry="2.200" fill="#e8457f"/><path d="M446.2 272.200c1 1.600 2.800 3 2.800 5a2.800 2.800 0 0 1-5.600 0c0-2 1.800-3.400 2.800-5z" fill="#f47b20"/><circle cx="446.2" cy="277.600" r="1.300" fill="#f9a23a"/><rect x="451.9" y="280.400" width="2.600" height="8" fill="#f7ecd2"/><path d="M451.9 281.4l2.600-1.200v1.500l-2.600 1.200z" fill="#f05a94"/><path d="M451.9 284.0l2.600-1.200v1.500l-2.600 1.200z" fill="#f05a94"/><path d="M451.9 286.6l2.600-1.200v1.500l-2.600 1.200z" fill="#f05a94"/><ellipse cx="453.2" cy="289.400" rx="2.900" ry="2.200" fill="#2ea8c0"/><path d="M453.2 272.200c1 1.600 2.800 3 2.800 5a2.800 2.800 0 0 1-5.600 0c0-2 1.800-3.400 2.800-5z" fill="#f47b20"/><circle cx="453.2" cy="277.600" r="1.300" fill="#f9a23a"/><rect x="459.1" y="280.400" width="2.600" height="8" fill="#f7ecd2"/><path d="M459.1 281.4l2.600-1.200v1.500l-2.600 1.200z" fill="#2ea8c0"/><path d="M459.1 284.0l2.600-1.200v1.500l-2.600 1.200z" fill="#2ea8c0"/><path d="M459.1 286.6l2.600-1.200v1.500l-2.600 1.200z" fill="#2ea8c0"/><ellipse cx="460.4" cy="289.400" rx="2.900" ry="2.200" fill="#f28a2e"/><path d="M460.4 272.200c1 1.600 2.800 3 2.800 5a2.800 2.800 0 0 1-5.600 0c0-2 1.800-3.400 2.800-5z" fill="#f47b20"/><circle cx="460.4" cy="277.600" r="1.300" fill="#f9a23a"/><rect x="438.7" y="322.4" width="0.900" height="0.900" fill="#f28a2e"/><rect x="451.9" y="322.2" width="0.900" height="0.900" fill="#f7c32e"/><rect x="447.7" y="333.4" width="0.900" height="0.900" fill="#f7c32e"/><rect x="438.0" y="328.2" width="0.900" height="0.900" fill="#e8457f"/><rect x="468.1" y="332.2" width="0.900" height="0.900" fill="#e8457f"/><rect x="437.6" y="333.5" width="0.900" height="0.900" fill="#e8457f"/><rect x="469.2" y="323.6" width="0.900" height="0.900" fill="#e8457f"/><rect x="441.6" y="332.7" width="0.900" height="0.900" fill="#e8457f"/><rect x="430.7" y="329.2" width="0.900" height="0.900" fill="#f28a2e"/><rect x="453.3" y="323.4" width="0.900" height="0.900" fill="#f28a2e"/><rect x="441.1" y="333.8" width="0.900" height="0.900" fill="#f7ecd2"/><rect x="471.4" y="321.1" width="0.900" height="0.900" fill="#e8457f"/><rect x="456.9" y="332.9" width="0.900" height="0.900" fill="#f7ecd2"/><rect x="436.5" y="326.7" width="0.900" height="0.900" fill="#e8457f"/><rect x="449.3" y="323.2" width="0.900" height="0.900" fill="#e8457f"/><rect x="440.0" y="331.8" width="0.900" height="0.900" fill="#f7c32e"/><rect x="428.5" y="329.5" width="0.900" height="0.900" fill="#e8457f"/><rect x="454.0" y="329.7" width="0.900" height="0.900" fill="#e8457f"/><rect x="433.8" y="330.1" width="0.900" height="0.900" fill="#f7c32e"/><rect x="448.3" y="323.7" width="0.900" height="0.900" fill="#f28a2e"/><rect x="440.9" y="325.8" width="0.900" height="0.900" fill="#f7ecd2"/><rect x="443.3" y="328.5" width="0.900" height="0.900" fill="#e8457f"/><rect x="431.5" y="321.8" width="0.900" height="0.900" fill="#2ea8c0"/><rect x="441.0" y="328.9" width="0.900" height="0.900" fill="#2ea8c0"/><rect x="432.6" y="333.6" width="0.900" height="0.900" fill="#e8457f"/><rect x="450.8" y="321.6" width="0.900" height="0.900" fill="#f7c32e"/><rect x="474.4" y="333.9" width="0.900" height="0.900" fill="#e8457f"/><rect x="427.0" y="324.9" width="0.900" height="0.900" fill="#2ea8c0"/><rect x="467.9" y="326.5" width="0.900" height="0.900" fill="#f7ecd2"/><rect x="462.7" y="322.0" width="0.900" height="0.900" fill="#f7ecd2"/><rect x="436.3" y="327.0" width="0.900" height="0.900" fill="#2ea8c0"/><rect x="439.5" y="329.1" width="0.900" height="0.900" fill="#2ea8c0"/><rect x="443.9" y="321.1" width="0.900" height="0.900" fill="#f7c32e"/><rect x="450.6" y="325.9" width="0.900" height="0.900" fill="#e8457f"/><rect x="282.600" y="162.700" width="80.400" height="21.600" fill="none" stroke="#6464f0" stroke-width="0.900"/><text x="322.200" y="178.100" text-anchor="middle" font-family="Liberation Sans, sans-serif" font-size="17.800" fill="#a30d12">My DVD</text></g></svg>
<svg style="left:0;top:0" width="700" height="90" viewBox="0 0 700 90" fill="none"><circle cx="140.9" cy="74.3" r="7.2" fill="#efefef"/><circle cx="505" cy="74.3" r="7.2" fill="#efefef"/><path d="M143 70.9l-3.8 3.5 3.8 3.5M503.2 70.9l3.8 3.5-3.8 3.5" stroke="#222" stroke-width="1.1"/></svg>
<div id="rp" class="a"></div>
<div class="tab" style="left:521.4px;width:38.6px">Template</div><div class="tab" style="left:559px;width:48.4px">Background</div><div class="tab on" style="left:606.4px;width:38.2px">Element</div><div class="tab" style="left:644.6px;width:30.2px">Audio</div>
<div class="t r" style="left:525.7px;top:81.6px">Style</div><div class="combo" style="left:545.3px;top:80.8px;width:65.4px">Text Only</div><div class="grp" style="left:525.7px;top:100.3px;width:162.2px;height:41.4px"></div><div class="gl" style="left:529.6px;top:95.6px">Alignment</div><div class="t r" style="left:531.4px;top:112px">Horizontal</div><div class="t r" style="left:531.4px;top:127px">Vertical</div>
<div class="ab" style="left:566.9px;top:110px"></div><div class="ab" style="left:581.6px;top:110px"></div><div class="ab" style="left:596.4px;top:110px"></div><div class="ab" style="left:611.1px;top:110px"></div><div class="ab" style="left:625.9px;top:110px"></div><div class="ab" style="left:640.6px;top:110px"></div><div class="ab" style="left:655.4px;top:110px"></div><div class="ab" style="left:670.1px;top:110px"></div><div class="ab" style="left:566.9px;top:125.4px"></div><div class="ab" style="left:581.6px;top:125.4px"></div><div class="ab" style="left:596.4px;top:125.4px"></div><div class="ab" style="left:611.1px;top:125.4px"></div><div class="ab" style="left:625.9px;top:125.4px"></div><div class="ab" style="left:640.6px;top:125.4px"></div><div class="ab" style="left:655.4px;top:125.4px"></div><div class="ab" style="left:670.1px;top:125.4px"></div>
<svg style="left:560px;top:105px" width="130" height="36" viewBox="560 105 130 36" fill="none" stroke-width="0.7"><g stroke="#555"><path d="M569.4 112.8v6"/><rect x="570.7" y="114.1" width="6.2" height="3.4" rx="0.5"/><rect x="584.3" y="114.1" width="6.4" height="3.4" rx="0.5"/><path d="M587.5 112.6v6.400"/><rect x="598.3" y="114.1" width="6.400" height="3.400" rx="0.500"/><path d="M606.1 112.8v6"/><path d="M569.6 127.5h6.400"/><rect x="570.8" y="129.0" width="4" height="5" rx="0.500"/><rect x="585.5" y="128.29999999999998" width="4" height="5.400" rx="0.500"/><path d="M584.1 131.0h6.800"/><rect x="600.3" y="127.5" width="4" height="5.200" rx="0.500"/><path d="M598.9 133.7h6.800"/></g><g stroke="#d4d4d4" stroke-width="0.700"><path d="M614.0 112.8v6"/><rect x="615.4" y="113.2" width="3" height="2.200"/><rect x="615.4" y="116.2" width="5" height="2.200"/><path d="M631.8 112.6v6.400"/><rect x="630.2" y="113.39999999999999" width="3.200" height="2"/><rect x="629.2" y="116.2" width="5.200" height="2.200"/><path d="M649.8 112.8v6"/><rect x="645.5" y="113.2" width="3" height="2.200"/><rect x="643.5" y="116.2" width="5" height="2.200"/><path d="M658.5 112.8v6M664.1 112.8v6M658.5 115.8h5.600"/><path d="M673.4 112.8v6M676.0 112.8v6M678.6 112.8v6" stroke-dasharray="2.200 1"/><path d="M673.4 117.39999999999999h5.200"/><path d="M614.0 127.69999999999999h6"/><rect x="614.6" y="129.1" width="2.200" height="5"/><rect x="617.4" y="129.1" width="2.200" height="3"/><path d="M628.4 131.1h6.800"/><rect x="629.2" y="128.5" width="2.200" height="5.200"/><rect x="632.2" y="129.5" width="2.200" height="3.200"/><path d="M643.5 134.29999999999998h6"/><rect x="644.1" y="128.1" width="2.200" height="5"/><rect x="646.9" y="130.1" width="2.200" height="3"/><path d="M658.3 128.1h6M658.3 134.1h6M661.3 128.1v6"/><path d="M673.2 128.1v6M675.0 128.1h4M675.0 131.1h4M675.0 134.1h4"/></g></svg>
<div class="grp" style="left:525.7px;top:150.6px;width:162.2px;height:43.9px"></div><div class="gl" style="left:529.6px;top:146px">Position</div><div class="t r" style="left:532.3px;top:163px">X</div><div class="t r" style="left:532.3px;top:178px">Y</div><div class="t r" style="left:606px;top:163px">Width</div><div class="t r" style="left:603.8px;top:178px">Height</div><div class="spin" style="left:539.2px;top:161.3px;width:32.6px">337<i><b></b></i></div><div class="spin" style="left:539.2px;top:176.6px;width:32.6px">78<i><b></b></i></div><div class="spin" style="left:626.6px;top:161.3px;width:32.6px">178<i><b></b></i></div><div class="spin" style="left:626.6px;top:176.6px;width:32.6px">49<i><b></b></i></div>
<div class="grp" style="left:525.7px;top:203.3px;width:162.2px;height:152.4px"></div><div class="gl" style="left:529.6px;top:198.7px">Text</div><div class="a" style="left:533px;top:213.4px;width:148px;height:104.9px;border:1px solid #ababab;background:#fff"></div><div class="t r" style="left:535.4px;top:216.5px">My DVD</div><div class="combo" style="left:532.3px;top:322.4px;width:114.3px">Arial</div><div class="spin" style="left:650px;top:322.2px;width:30.6px;height:11.8px">30<i style="height:9.8px"><b></b></i></div>
<div class="sb" style="left:532.7px;top:337.5px"></div><div class="sb" style="left:548.2px;top:337.5px"></div><div class="a" style="left:534.2px;top:339px;width:8.8px;height:8.8px;background:#a30d12"></div><div class="a" style="left:549.7px;top:339px;width:8.8px;height:8.8px;background:#0c0c0c"></div><div class="sb" style="left:576.8px;top:337.5px"></div><div class="sb" style="left:592.8px;top:337.5px"></div><div class="sb" style="left:608.6px;top:337.5px"></div><div class="sb" style="left:624.5px;top:337.5px"></div><div class="sb" style="left:652.5px;top:337.5px"></div><div class="sb" style="left:667.9px;top:337.5px"></div>
<svg style="left:545px;top:336px" width="140" height="15" viewBox="545 336 140 15" fill="none" stroke="#555" stroke-width="0.700"><path d="M551 340.400l6.400 6.600" stroke="#b01818" stroke-width="0.600"/><text x="582.700" y="346.200" font-family="Liberation Serif, serif" font-style="italic" font-size="8.400" fill="#444" stroke="none" text-anchor="middle">I</text><text x="598.700" y="346.300" font-family="Liberation Sans, sans-serif" font-size="7.800" fill="#555" stroke="none" text-anchor="middle">B</text><text x="614.500" y="345.700" font-family="Liberation Sans, sans-serif" font-size="7.200" fill="#888" stroke="none" text-anchor="middle">U</text><path d="M611.600 347.200h5.800" stroke="#888"/><text x="630.500" y="346.200" font-family="Liberation Sans, sans-serif" font-size="7.400" fill="#666" stroke="none" text-anchor="middle">S</text><path d="M627.200 343.500h6.600" stroke="#555"/><path d="M655.400 341.400h6M655.400 345.600h6M655.400 343.500h1.600M659.800 343.500h1.600" stroke="#666"/><path d="M657.600 343.500h1.600" stroke="#666" stroke-width="1.200"/><path d="M671.600 340.500v6M675.800 340.500v6M673.700 340.500v1.600M673.700 344.900v1.600" stroke="#666"/><path d="M673.700 342.700v1.600" stroke="#666" stroke-width="1.200"/></svg>
<div class="btn" style="left:525.7px;top:361.9px;width:40.8px">New</div><div class="btn" style="left:570px;top:361.9px;width:41px">Duplicate</div><div class="btn" style="left:646.3px;top:361.9px;width:41.3px">Delete</div>
<svg style="left:600px;top:84px" width="60" height="250" viewBox="600 84 60 250" fill="none" stroke="#444" stroke-width="0.8"><path d="M603.6 85.6l2 2 2-2M637.2 327.2l2 2 2-2"/></svg>
</body></html>
